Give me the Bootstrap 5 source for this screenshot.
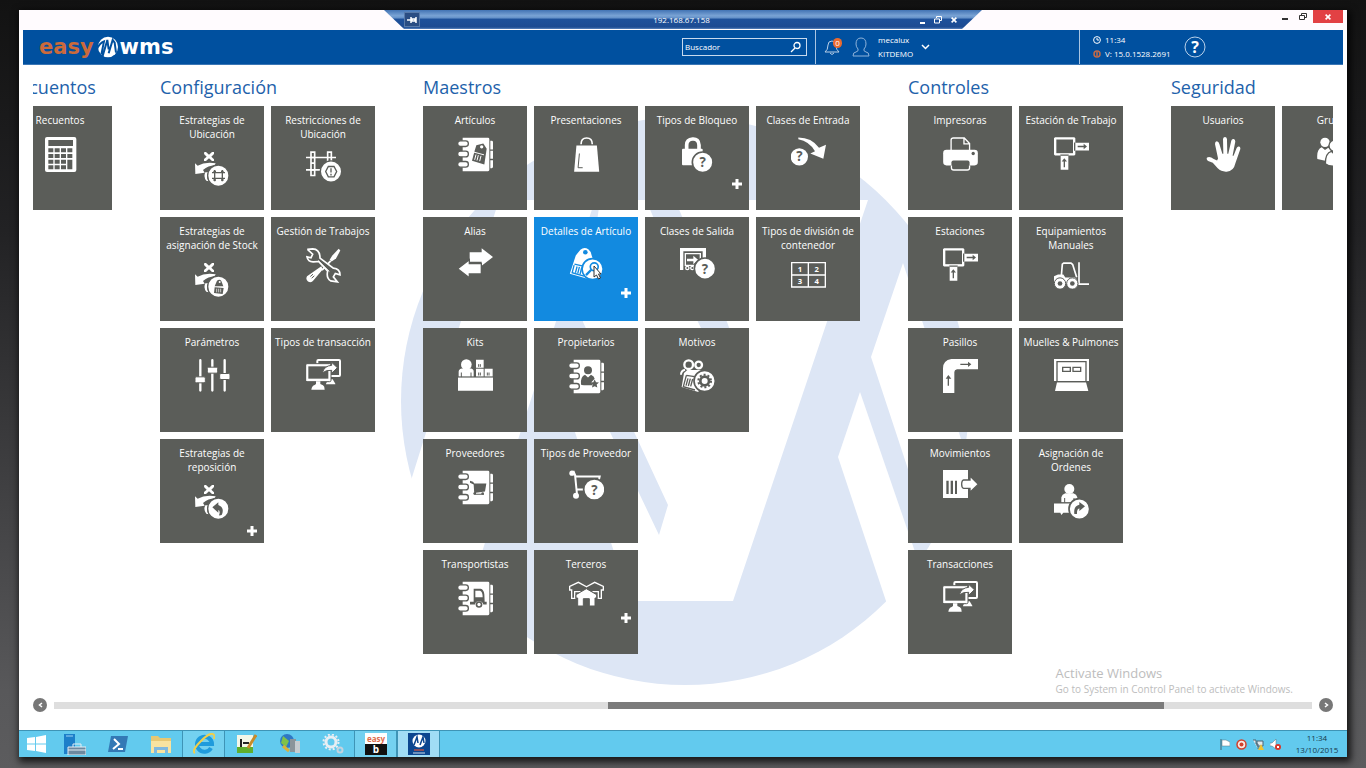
<!DOCTYPE html>
<html lang="es">
<head>
<meta charset="utf-8">
<meta name="viewport" content="width=device-width, initial-scale=1">
<title>Easy WMS</title>
<link href="https://cdn.jsdelivr.net/npm/bootstrap@5.3.0/dist/css/bootstrap.min.css" rel="stylesheet">
<style>
:root{--bg:#5b5d59;--brand:#00509f;--mark-tint:#dde6f5}
body{font-family:"Open Sans","Noto Sans",sans-serif;font-size:10px;line-height:14px;background:linear-gradient(#121212,#222224 30%,#58585a 90%,#5c5c5e);padding:10px 19px 11px;overflow:hidden}
.desktop{background:#fff;box-shadow:2px 3px 7px 2px rgba(0,0,0,.75)}
.titlebar{display:grid;grid-template-columns:1fr 598px 1fr;height:20px;background:#fffbfe}
.remote-tab{height:19px;padding:0 20px;color:#fff;font-size:8px;background:linear-gradient(#4273b4,#79a3d4 30%,#6390c8 42%,#1e519b 48%,#1d4b92 90%,#5b84bd);clip-path:polygon(0 0,100% 0,calc(100% - 20px) 100%,20px 100%)}
.plain-btn{border:0;padding:0;background:none;color:inherit;display:inline-flex;align-items:center;justify-content:center}
.pin{width:16px;height:15px;background:#2a4d83;border:1px solid #5879a8}
.close-win{width:30px;height:13px;background:#e24144;color:#fff}
.appbar{height:35px;background:var(--brand);color:#fff;margin:0 4px;font-size:8px;line-height:14px;border-bottom:1px solid #3a76b5}
.brand-text{font-family:"DejaVu Sans",sans-serif;font-weight:700;font-size:21px;line-height:24px;color:#fff;text-decoration:none}
.brand-text b{color:#cb6a3b}
.seek{width:125px;height:18px;border:1px solid #c8daee}
.seek input{background:none;border:0;outline:0;color:#fff;width:100%;padding:0 0 0 2px;font-size:8px}
.seek input::placeholder{color:#fff;opacity:1}
.zone{width:264px;border-left:1px solid #a9c5e2}
.stamp{margin:0 13px}
.bell{width:20px}
.count{position:absolute;right:2px;top:0;width:9px;height:10px;border-radius:5px;background:#e96a30;font-size:8px;line-height:10px;text-align:center}
.stage{position:relative}
.mark-bg{position:absolute;left:382px;top:52px;width:570px;height:570px}
.board{position:relative;overflow:hidden;margin:0 14px;gap:48px;padding-top:9px}
.board>section:first-child{margin-left:-25px}
.group-title{font-size:18px;line-height:27px;height:32px;margin:0;font-weight:400;color:#1e62ab;white-space:nowrap}
.tiles{gap:7px}
.tile{position:relative;display:flex;flex-direction:column;align-items:center;width:104px;height:104px;flex:none;background:var(--bg);color:#fff;text-align:center;text-decoration:none;padding-top:7px}
.tile span{padding:0 2px}
.tile svg.ic{width:35px;margin-top:10px;fill:#fff;stroke:none;flex:none}
.tile .more{align-self:flex-end;width:10px;height:10px;margin:7px 7px 0 0;fill:#fff}
.tile.on{--bg:#128ae0}
.cursor{position:absolute;left:59px;top:48px;width:9px;height:15px}
.k{fill:var(--bg)}
.ln{fill:none;stroke:#fff}
.kl{fill:none;stroke:var(--bg)}
.ws{stroke:var(--bg)}
.q{font:700 40px "Open Sans",sans-serif;fill:var(--bg);text-anchor:middle}
.num{font:700 23px "Open Sans",sans-serif;fill:#fff;text-anchor:middle}
.activate{color:#bdbdbd;padding:0 54px 2px 0;white-space:nowrap}
.activate .big{font-size:13px;line-height:17px}
.scroller{padding:0 14px;gap:7px;height:14px}
.knob{width:14px;height:14px;border-radius:50%;background:#777;color:#fff}
.track{height:7px;background:#dedede}
.thumb{height:7px;background:#7b7b7b;margin-left:44%;width:44.2%}
.taskbar{height:27px;background:#62caee;border-top:1px solid #3e94b6;color:#17384a;margin-top:18px}
.task{width:43px;height:26px}
.task.start{width:34px}
.task.open{background:#74d1f0;border:solid #3e94b6;border-width:0 1px}
.task.current{background:#a1ddf5}
.tray{gap:6px}
.clock{font-size:8px;line-height:12px;width:60px}
</style>
</head>
<body class="d-flex flex-column min-vh-100">

<svg class="d-none" aria-hidden="true">
 <defs>
  <g id="strat">
   <path d="M28 3l5 0 9 8 9-8 6 0v6l-8 8 8 8v5h-6l-9-8-9 8h-6v-6l8-7-8-8z"/>
   <path d="M0 37l8 7Q30 32 62 37L59 43Q40 44 24 57l5 8L1 69z"/>
   <path d="M31 64q-7 13 3 25l7 2q-9-14-1-27z"/>
   <circle class="ws" stroke-width="4" cx="70" cy="74" r="32"/>
  </g>
  <g id="book">
   <path d="M14 2h76q4 0 4 4v92q0 4-4 4H14V86h14v-10H14V56h14V46H14V26h14V17H14z"/>
   <g class="ws" stroke-width="4"><rect x="-1" y="11" width="32" height="17" rx="8"/><rect x="-1" y="42" width="32" height="17" rx="8"/><rect x="-1" y="73" width="32" height="17" rx="8"/></g>
   <path d="M97 11h4q4 0 4 4v22h-8zM97 41h8v24h-8zM97 69h8v20q0 4-4 4h-4z"/>
  </g>
 </defs>
 <symbol id="i-calc" viewBox="0 0 105 105"><rect x="6" width="94" height="105" rx="6"/><g class="k"><path d="M16 9h74v18H16zM16 34h15v12H16zM35 34h15v12H35zM54 34h15v12H54zM73 34h15v12H73zM16 51h15v12H16zM35 51h15v12H35zM54 51h15v12H54zM73 51h15v12H73zM16 68h15v12H16zM35 68h15v12H35zM54 68h15v12H54zM73 68h15v29H73zM16 85h15v12H16zM35 85h15v12H35zM54 85h15v12H54z"/></g></symbol>
 <symbol id="i-sgrid" viewBox="0 0 105 105"><use href="#strat"/><path class="kl" stroke-width="4" d="M59 57v34M82 57v34M51 65h39M51 82h39M55 61h8M78 61h8M55 87h8M78 87h8"/></symbol>
 <symbol id="i-stag" viewBox="0 0 105 105"><use href="#strat"/><path class="k" d="M66 56q8-6 13 1l6 16H59zM59 76l27 2-3 18-26-3z"/><circle cx="74" cy="60" r="3"/><path class="ln" stroke-width="2" d="M65 80v11M71 80v11M77 80v11"/></symbol>
 <symbol id="i-srep" viewBox="0 0 105 105"><use href="#strat"/><path class="k" d="M52 70l18-15v8q20 8 10 30-5 2-8 1 5-14-2-16v8z"/></symbol>
 <symbol id="i-restr" viewBox="0 0 105 92"><path class="ln" stroke-width="5" d="M0 19h90M0 56h45"/><path class="ln" stroke-width="5" d="M15 3h11v70H15zM65 3h11v32H65zM15 19h11M15 36h11M15 56h11"/><circle class="ws" stroke-width="4" cx="75" cy="61" r="32"/><path class="kl" stroke-width="4" d="M67 46h17l8 15-8 16H67l-8-16z"/><path class="kl" stroke-width="4" d="M75 51v13M75 68v5"/></symbol>
 <symbol id="i-tools" viewBox="0 0 105 104"><path d="M98 2l5 5-13 24-13 9-6-5 8-13z"/><path d="M72 36l-26 28 4 4 26-28z"/><path d="M46 54L3 84q-5 10 3 16 10 5 16-3l28-33z"/><path class="kl" stroke-width="3" d="M13 85l8-7M17 90l8-7"/><path class="k" stroke="#fff" stroke-width="5" d="M6 5l14 13-5 11L3 26q3 16 20 15l15-1 27 29q-5 20 9 29l20 3-12-15 6-10 14 4q0-18-20-20L42 30Q42 3 20 2L6 3z"/><path class="ln" stroke-width="3" d="M36 37l34 33"/></symbol>
 <symbol id="i-sliders" viewBox="0 0 105 98"><path class="ln" stroke-width="7" stroke-linecap="round" d="M16 3v91M52 3v91M89 3v91"/><g class="ws" stroke-width="3"><rect x="0" y="53" width="31" height="18" rx="4"/><rect x="37" y="24" width="31" height="18" rx="4"/><rect x="74" y="43" width="31" height="18" rx="4"/></g></symbol>
 <symbol id="i-screens" viewBox="0 0 105 93"><rect class="ln" stroke-width="6" x="34" y="3" width="68" height="48" rx="3"/><path d="M60 74q4-10 10-13h10l8 13v2H60z"/><rect class="ws" stroke-width="3" x="-1" y="14" width="76" height="54" rx="4"/><path class="k" d="M7 22h60v37H7z"/><path d="M16 92q2-12 10-14l4-3v-8h13v8l8 4q5 3 5 13z"/><path class="ws" stroke-width="3" d="M49 42q6-22 28-23v-9l17 16-17 17v-9q-17-2-28 8z"/></symbol>
 <symbol id="i-btag" viewBox="0 0 105 104"><use href="#book"/><path class="k" d="M55 24l21-5 10 16-7 47-37-11 8-30z"/><circle cx="71" cy="29" r="5"/><path class="ln" stroke-width="3" d="M48 45l30 8M54 52l-4 16M61 54l-4 16M69 56l-4 16"/></symbol>
 <symbol id="i-bag" viewBox="0 0 105 106"><path class="ln" stroke-width="5" d="M36 22q0-19 17-19t17 19"/><path d="M22 26h62l7 79H15z"/><path class="kl" stroke-width="3" d="M31 50l-4 43h14"/></symbol>
 <symbol id="i-lock" viewBox="0 0 105 105"><path class="ln" stroke-width="11" d="M20 42V24q0-17 18-18t19 18v18"/><rect x="6" y="35" width="62" height="50" rx="3"/><circle class="ws" stroke-width="5" cx="68" cy="76" r="31"/><text class="q" x="68" y="91">?</text></symbol>
 <symbol id="i-entry" viewBox="0 0 105 86"><path d="M22 1q40 0 62 31l21-9-8 42-39-16 14-7Q55 12 22 6z"/><circle cx="25" cy="59" r="26"/><text class="q" x="25" y="73">?</text></symbol>
 <symbol id="i-alias" viewBox="0 0 105 88"><path d="M35 12h36V0l34 26-34 26V40H35z"/><path class="ws" stroke-width="4" d="M70 46v31H34v11L-1 61l35-27v12z"/></symbol>
 <symbol id="i-detail" viewBox="0 0 105 100"><path d="M34 5q12-9 24-1 8 6 10 18l10 30-20 42-56-16 18-55z"/><circle class="k" cx="49" cy="13" r="7"/><path class="kl" stroke-width="4" d="M16 49l40 9M15 52L9 75l36 10M24 56l-5 19M31 57l-5 20M38 59l-5 20"/><circle class="ws" stroke-width="5" cx="71" cy="64" r="32"/><circle class="kl" stroke-width="5" cx="76" cy="57" r="12"/><path class="kl" stroke-width="7" d="M67 66L51 82"/></symbol>
 <symbol id="i-exit" viewBox="0 0 105 93"><path d="M0 0h78v34H68V10H10v56H0z"/><path class="ln" stroke-width="4" d="M16 17h45v35H16z"/><path d="M21 32h19v-9l15 13-15 13v-9H21z"/><circle class="ln" stroke-width="4" cx="22" cy="60" r="5"/><circle class="ln" stroke-width="4" cx="37" cy="60" r="5"/><circle class="ws" stroke-width="5" cx="75" cy="62" r="32"/><text class="q" x="75" y="77">?</text></symbol>
 <symbol id="i-cells" viewBox="0 0 105 78"><path class="ln" stroke-width="4" d="M2 2h101v73H2zM52 2v73M2 39h101"/><text class="num" x="27" y="29">1</text><text class="num" x="77" y="29">2</text><text class="num" x="27" y="66">3</text><text class="num" x="77" y="66">4</text></symbol>
 <symbol id="i-kits" viewBox="0 0 105 95"><circle cx="25" cy="16" r="16"/><path d="M2 52V37q1-8 10-9h26q9 1 9 9v15zM54 2h23v24H54zM54 29h23v23H54zM80 29h24v23H80zM0 54h105v41H0z"/><path class="kl" stroke-width="3" d="M10 40v14M39 40v14M62 15v8M67 15v8M62 40v9M67 40v9M88 40v9M93 40v9"/><path class="kl" stroke-width="2" d="M0 54h105"/></symbol>
 <symbol id="i-bperson" viewBox="0 0 105 104"><use href="#book"/><g class="k"><circle cx="57" cy="33" r="12"/><path d="M36 76q-2-24 12-29l9 8 9-8q10 4 11 12l-10 10 4 9H45q-9 0-9-2z"/><path d="M77 61l4 8 9 1-7 6 2 9-8-4-8 4 2-9-7-6 9-1z"/></g></symbol>
 <symbol id="i-reasons" viewBox="0 0 105 102"><path class="ln" stroke-width="6" d="M3 47q0-12 12-15"/><circle class="ln" stroke-width="7" cx="26" cy="17" r="13"/><circle class="ln" stroke-width="7" cx="56" cy="18" r="10"/><path d="M12 42l10-9h44l7 16-18 50-50-15z"/><path class="kl" stroke-width="4" d="M19 49L10 83l35 10M19 49l25 4M24 58l-6 22M31 59l-6 22M38 60l-6 22"/><circle class="ws" stroke-width="5" cx="74" cy="66" r="32"/><circle class="kl" stroke-width="8" cx="74" cy="66" r="13"/><circle class="kl" stroke-width="6" stroke-dasharray="6 6" cx="74" cy="66" r="19"/></symbol>
 <symbol id="i-bcart" viewBox="0 0 105 104"><use href="#book"/><path class="k" d="M36 32l9 3 4 5h36l-4 24-27 4v3h24v3H49l-2-31-11-5z"/><circle class="k" cx="50" cy="70" r="4"/><circle class="k" cx="74" cy="70" r="4"/></symbol>
 <symbol id="i-cartq" viewBox="0 0 105 87"><path class="ln" stroke-width="6" d="M4 8l10-4 6 14h72l-5 20M18 12l6 60M24 57h30"/><circle cx="9" cy="8" r="8"/><circle cx="21" cy="76" r="9"/><circle class="ws" stroke-width="5" cx="76" cy="57" r="32"/><text class="q" x="76" y="72">?</text></symbol>
 <symbol id="i-btruck" viewBox="0 0 105 104"><use href="#book"/><path class="k" d="M47 23h21q9 2 11 16l1 23h6v8H76q-2-10-13-10T51 70H36v-8h11zM52 29v19h22q0-16-8-19z" fill-rule="evenodd"/><circle class="k" cx="63" cy="70" r="10"/><circle cx="63" cy="70" r="5"/></symbol>
 <symbol id="i-houses" viewBox="0 0 105 73"><path class="ln" stroke-width="4" d="M2 22V15L28 3l26 14M2 20v6h6v25h9V31h18M103 22v-7L77 3 51 17M103 20v6h-6v25h-9V31H70"/><path class="ws" stroke-width="3" d="M52 22l31 18v10h-5v24H61V52H43v22H26V50h-5V40z"/></symbol>
 <symbol id="i-printer" viewBox="0 0 105 103"><path class="ln" stroke-width="4" d="M24 40V9q0-6 7-6h33l16 17v20M63 3v18h17"/><rect y="39" width="105" height="47" rx="10"/><circle class="k" cx="91" cy="50" r="5"/><rect x="25" y="71" width="55" height="29" rx="6" class="k"/><path class="ln" stroke-width="4" d="M25 86v7q0 7 7 7h41q7 0 7-7v-7"/></symbol>
 <symbol id="i-station" viewBox="0 0 105 98"><path d="M3 0h58l3 3v14h41v23H64v12l-3 3H43v43H20V55H3l-3-3V3z"/><path class="k" d="M7 7h50v41H7z"/><path class="kl" stroke-width="4" d="M62 16v25M19 54h25M71 28h21M31 90V69"/><path class="k" d="M89 20l10 8-10 8zM23 73l8-10 8 10z"/></symbol>
 <symbol id="i-fork" viewBox="0 0 105 80"><path class="ln" stroke-width="5" d="M22 42l3-36 4-3h22l5 4 12 38M75 0v66h30"/><path d="M0 42l12-5h16l6 9h28l5 4v14H0z"/><g class="ws" stroke-width="3"><circle cx="18" cy="64" r="17"/><circle cx="55" cy="64" r="17"/></g><circle class="k" cx="18" cy="64" r="7"/><circle class="k" cx="55" cy="64" r="7"/></symbol>
 <symbol id="i-hand" viewBox="0 0 105 106"><path d="M3 62q8-5 20 5l10 4 3-6-9-42q-1-9 5-10 6 0 8 8l9 30h3L51 6q1-6 6-6t6 6l1 45h3l9-40q2-6 7-5 6 2 5 9l-8 42h3l9-23q3-7 8-5 5 3 3 9L89 78Q83 105 62 105 46 106 35 95L20 78 6 73Q-1 67 3 62z"/></symbol>
 <symbol id="i-group" viewBox="0 0 105 90"><circle cx="24" cy="16" r="14"/><circle cx="82" cy="16" r="14"/><path d="M1 66Q-2 38 14 31l10 8 10-7 16 18-22 22zM104 66q3-28-13-35l-10 8-10-7-16 18 22 22z"/><g class="ws" stroke-width="4"><circle cx="53" cy="26" r="17"/><path d="M25 80q0-32 18-37l10 9 10-9q18 5 18 37-10 8-28 8t-28-8z"/></g></symbol>
 <symbol id="i-aisle" viewBox="0 0 105 102"><path d="M25 0h80v31H42q-8 2-8 8v63H0V28Q0 4 25 0z"/><path class="kl" stroke-width="4" d="M52 16h25M16 80V55"/><path class="k" d="M75 8l10 8-10 8zM8 59l8-11 9 11z"/></symbol>
 <symbol id="i-dock" viewBox="0 0 105 96"><path d="M0 0h105v66H0zM9 70h87l7 26H3z"/><path class="kl" stroke-width="4" d="M9 66V8h87v58M8 68h89M26 25h23v12H26zM57 25h23v12H57z"/></symbol>
 <symbol id="i-move" viewBox="0 0 105 84"><path d="M0 0h75v84H0z"/><path class="k" d="M10 32h7v40h-7zM23 32h7v40h-7zM36 32h6v40h-6z"/><path class="ws" stroke-width="4" d="M62 30h19V18l25 25-25 24V55H62q-6-1-6-12 0-12 6-13z"/></symbol>
 <symbol id="i-assign" viewBox="0 0 105 105"><circle cx="46" cy="15" r="15"/><path d="M22 55V40q2-9 12-12h24q10 3 12 12v15zM0 57h60v29H28l-6 7-3-7H0z"/><path class="kl" stroke-width="3" d="M32 42v14M60 42v8M0 57h50"/><circle class="ws" stroke-width="5" cx="76" cy="75" r="31"/><path class="k" d="M61 90q-3-24 15-28v-8l17 13-17 14v-8q-8 3-7 17z"/></symbol>
 <symbol id="i-plus" viewBox="0 0 20 20"><path d="M7 0h6v7h7v6h-7v7H7v-7H0V7h7z"/></symbol>
</svg>

<div class="desktop d-flex flex-column flex-grow-1">
 <div class="titlebar">
  <span></span>
  <div class="remote-tab d-flex align-items-center">
   <button class="plain-btn pin" aria-label="Fijar"><svg width="10" height="8" viewBox="0 0 10 8"><path d="M0 4h4M4 1v6M5 3h3v2H5zM9 1v6" stroke="#fff" stroke-width="1.5" fill="none"/></svg></button>
   <span class="flex-grow-1 text-center ps-4">192.168.67.158</span>
   <div class="d-flex gap-2 me-1">
    <button class="plain-btn" aria-label="Minimizar"><svg width="7" height="8"><path d="M1 7h5" stroke="#fff" stroke-width="2"/></svg></button>
    <button class="plain-btn" aria-label="Restaurar"><svg width="8" height="8"><path d="M2.500 2V.5h5v4H6M.5 3h5v4h-5z" stroke="#fff" fill="none"/></svg></button>
    <button class="plain-btn" aria-label="Cerrar"><svg width="8" height="8" viewBox="-1 -1 10 10"><path d="M1 1l6 6M7 1L1 7" stroke="#fff" stroke-width="2"/></svg></button>
   </div>
  </div>
  <div class="d-flex justify-content-end align-items-start pe-1">
   <button class="plain-btn mt-1 me-2" aria-label="Minimizar"><svg width="8" height="6"><path d="M1 5h6" stroke="#333" stroke-width="2"/></svg></button>
   <button class="plain-btn me-1" aria-label="Restaurar"><svg width="12" height="12"><path d="M4.500 5V3.500h5v4H8M2.500 5.500h5v4h-5z" stroke="#333" fill="none"/></svg></button>
   <button class="plain-btn close-win" aria-label="Cerrar"><svg width="8" height="8" viewBox="-1 -1 10 10"><path d="M1 1l6 6M7 1L1 7" stroke="#fff" stroke-width="2"/></svg></button>
  </div>
 </div>

 <header class="appbar d-flex align-items-stretch">
  <a class="brand-text d-flex align-items-center ps-3" href="#"><b>easy</b>
   <svg width="26" height="22" viewBox="0 0 78 66"><ellipse cx="42" cy="33" rx="30" ry="31" fill="#fff"/><path d="M8 40Q18 20 30 16L22 56M26 60L40 12 44 40M44 52L56 12 62 20 66 50" fill="none" stroke="#00509f" stroke-width="6"/></svg>wms</a>
  <form class="ms-auto me-2 d-flex align-items-center" role="search">
   <div class="seek d-flex align-items-center"><input type="text" placeholder="Buscador" aria-label="Buscador">
    <button type="button" class="plain-btn me-1" aria-label="Buscar"><svg width="12" height="12" viewBox="0 0 12 12" fill="none" stroke="#fff" stroke-width="1.300"><circle cx="7" cy="4.500" r="3"/><path d="M5 7L1 11"/></svg></button></div>
  </form>
  <div class="zone d-flex align-items-center ps-2">
   <button class="plain-btn position-relative bell justify-content-start" aria-label="Avisos"><svg width="16" height="18" viewBox="0 0 16 18" fill="none" stroke="#b9cfe7"><path d="M1 14q3-2 3-7 0-4 4-4t4 4q0 5 3 7zM6 15q2 3 4 0"/></svg><span class="count">0</span></button>
   <svg class="ms-2" width="18" height="20" viewBox="0 0 18 20" fill="none" stroke="#8fb3da"><path d="M9 1q5 0 5 6 0 3-2 5-1 2 2 3 3 0 3 4H1q0-4 3-4 3-1 2-3-2-2-2-5 0-6 5-6z"/></svg>
   <div class="ms-2">mecalux<br>KITDEMO</div>
   <button class="plain-btn ms-2" aria-label="Abrir menú"><svg width="9" height="6" viewBox="0 0 9 6" fill="none" stroke="#fff" stroke-width="1.500"><path d="M1 1l3.500 3.500L8 1"/></svg></button>
  </div>
  <div class="zone d-flex align-items-center">
   <div class="stamp">
    <div class="d-flex align-items-center gap-1"><svg width="8" height="8" viewBox="0 0 8 8" fill="none" stroke="#fff"><circle cx="4" cy="4" r="3.400"/><path d="M4 2v2h2"/></svg>11:34</div>
    <div class="d-flex align-items-center gap-1"><svg width="8" height="8" viewBox="0 0 8 8" fill="none" stroke="#c56a45" stroke-width="1.500"><circle cx="4" cy="4" r="3"/><path d="M4 2v4"/></svg>V: 15.0.1528.2691</div>
   </div>
   <button class="plain-btn" aria-label="Ayuda"><svg width="22" height="22" viewBox="0 0 22 22"><circle cx="11" cy="11" r="10" fill="none" stroke="#b9d1ea"/><text x="11" y="17" fill="#fff" text-anchor="middle" font-size="16" font-weight="700">?</text></svg></button>
  </div>
 </header>

 <main class="stage flex-grow-1 d-flex flex-column">
  <svg class="mark-bg" viewBox="401 117 570 570" aria-hidden="true">
   <circle cx="685" cy="401" r="284" fill="#dde6f5"/>
   <g fill="#fff">
    <path d="M600 200H868L733 601H630L572 423 590 390 659 535 668 505 583 322z"/>
    <path d="M903 263L871 357 940 566H990V527z"/>
    <path d="M860 392L838 457 888 607 934 607z"/>
    <path d="M499 200L408 490 400 622H460L483 549 595 200z"/>
   </g>
   <path d="M646 200h29l52 122 12 32-10 30-31-62z" fill="#dde6f5"/>
  </svg>

  <div class="board d-flex">
   <section><h2 class="group-title">Recuentos</h2>
    <div class="tiles d-flex"><a class="tile" href="#"><span>Recuentos</span><svg class="ic" height="35"><use href="#i-calc"/></svg></a></div>
   </section>
   <section><h2 class="group-title">Configuración</h2>
    <div class="tiles d-flex">
     <div class="tiles d-flex flex-column">
      <a class="tile" href="#"><span>Estrategias de Ubicación</span><svg class="ic" height="35"><use href="#i-sgrid"/></svg></a>
      <a class="tile" href="#"><span>Estrategias de asignación de Stock</span><svg class="ic" height="35"><use href="#i-stag"/></svg></a>
      <a class="tile" href="#"><span>Parámetros</span><svg class="ic" height="33"><use href="#i-sliders"/></svg></a>
      <a class="tile" href="#"><span>Estrategias de reposición</span><svg class="ic" height="35"><use href="#i-srep"/></svg><svg class="more"><use href="#i-plus"/></svg></a>
     </div>
     <div class="tiles d-flex flex-column">
      <a class="tile" href="#"><span>Restricciones de Ubicación</span><svg class="ic" height="31"><use href="#i-restr"/></svg></a>
      <a class="tile" href="#"><span>Gestión de Trabajos</span><svg class="ic" height="35"><use href="#i-tools"/></svg></a>
      <a class="tile" href="#"><span>Tipos de transacción</span><svg class="ic" height="31"><use href="#i-screens"/></svg></a>
     </div>
    </div>
   </section>
   <section><h2 class="group-title">Maestros</h2>
    <div class="tiles d-flex">
     <div class="tiles d-flex flex-column">
      <a class="tile" href="#"><span>Artículos</span><svg class="ic" height="35"><use href="#i-btag"/></svg></a>
      <a class="tile" href="#"><span>Alias</span><svg class="ic" height="30"><use href="#i-alias"/></svg></a>
      <a class="tile" href="#"><span>Kits</span><svg class="ic" height="32"><use href="#i-kits"/></svg></a>
      <a class="tile" href="#"><span>Proveedores</span><svg class="ic" height="35"><use href="#i-bcart"/></svg></a>
      <a class="tile" href="#"><span>Transportistas</span><svg class="ic" height="35"><use href="#i-btruck"/></svg></a>
     </div>
     <div class="tiles d-flex flex-column">
      <a class="tile" href="#"><span>Presentaciones</span><svg class="ic" height="35"><use href="#i-bag"/></svg></a>
      <a class="tile on" href="#"><span>Detalles de Artículo</span><svg class="ic" height="33"><use href="#i-detail"/></svg><svg class="more"><use href="#i-plus"/></svg><svg class="cursor" viewBox="0 0 9 15"><path d="M1 1v11l2.500-2 2 4 2-1-2-4H8z" fill="#fff" stroke="#333"/></svg></a>
      <a class="tile" href="#"><span>Propietarios</span><svg class="ic" height="35"><use href="#i-bperson"/></svg></a>
      <a class="tile" href="#"><span>Tipos de Proveedor</span><svg class="ic" height="30"><use href="#i-cartq"/></svg></a>
      <a class="tile" href="#"><span>Terceros</span><svg class="ic" height="25"><use href="#i-houses"/></svg><svg class="more"><use href="#i-plus"/></svg></a>
     </div>
     <div class="tiles d-flex flex-column">
      <a class="tile" href="#"><span>Tipos de Bloqueo</span><svg class="ic" height="35"><use href="#i-lock"/></svg><svg class="more"><use href="#i-plus"/></svg></a>
      <a class="tile" href="#"><span>Clases de Salida</span><svg class="ic" height="31"><use href="#i-exit"/></svg></a>
      <a class="tile" href="#"><span>Motivos</span><svg class="ic" height="34"><use href="#i-reasons"/></svg></a>
     </div>
     <div class="tiles d-flex flex-column">
      <a class="tile" href="#"><span>Clases de Entrada</span><svg class="ic" height="29"><use href="#i-entry"/></svg></a>
      <a class="tile" href="#"><span>Tipos de división de contenedor</span><svg class="ic" height="26"><use href="#i-cells"/></svg></a>
     </div>
    </div>
   </section>
   <section><h2 class="group-title">Controles</h2>
    <div class="tiles d-flex">
     <div class="tiles d-flex flex-column">
      <a class="tile" href="#"><span>Impresoras</span><svg class="ic" height="34"><use href="#i-printer"/></svg></a>
      <a class="tile" href="#"><span>Estaciones</span><svg class="ic" height="33"><use href="#i-station"/></svg></a>
      <a class="tile" href="#"><span>Pasillos</span><svg class="ic" height="34"><use href="#i-aisle"/></svg></a>
      <a class="tile" href="#"><span>Movimientos</span><svg class="ic" height="28"><use href="#i-move"/></svg></a>
      <a class="tile" href="#"><span>Transacciones</span><svg class="ic" height="31"><use href="#i-screens"/></svg></a>
     </div>
     <div class="tiles d-flex flex-column">
      <a class="tile" href="#"><span>Estación de Trabajo</span><svg class="ic" height="33"><use href="#i-station"/></svg></a>
      <a class="tile" href="#"><span>Equipamientos Manuales</span><svg class="ic" height="27"><use href="#i-fork"/></svg></a>
      <a class="tile" href="#"><span>Muelles &amp; Pulmones</span><svg class="ic" height="32"><use href="#i-dock"/></svg></a>
      <a class="tile" href="#"><span>Asignación de Ordenes</span><svg class="ic" height="35"><use href="#i-assign"/></svg></a>
     </div>
    </div>
   </section>
   <section><h2 class="group-title">Seguridad</h2>
    <div class="tiles d-flex">
     <a class="tile" href="#"><span>Usuarios</span><svg class="ic" height="35"><use href="#i-hand"/></svg></a>
     <a class="tile" href="#"><span>Grupos</span><svg class="ic" height="30"><use href="#i-group"/></svg></a>
    </div>
   </section>
  </div>

  <div class="mt-auto">
   <div class="activate d-flex justify-content-end"><div><div class="big">Activate Windows</div>Go to System in Control Panel to activate Windows.</div></div>
   <div class="scroller d-flex align-items-center">
    <button class="plain-btn knob" aria-label="Anterior"><svg width="5" height="6" fill="none" stroke="#fff" stroke-width="1.500"><path d="M4 1L1.500 3 4 5"/></svg></button>
    <div class="track flex-grow-1"><div class="thumb"></div></div>
    <button class="plain-btn knob" aria-label="Siguiente"><svg width="5" height="6" fill="none" stroke="#fff" stroke-width="1.500"><path d="M1 1l2.500 2L1 5"/></svg></button>
   </div>
  </div>
 </main>

 <footer class="taskbar d-flex align-items-center">
  <button class="plain-btn task start" aria-label="Inicio"><svg width="19" height="18" viewBox="0 0 19 18" fill="#fff"><path d="M0 3l8-1v6.500H0zM9 2l10-2v8.500H9zM0 9.500h8V16l-8-1zM9 9.500h10V18L9 16z"/></svg></button>
  <button class="plain-btn task" aria-label="Administrador del servidor"><svg width="22" height="22" viewBox="0 0 22 22"><path d="M0 1h11v20H0z" fill="#1d7fc9"/><path d="M2 3h7" stroke="#9fd4f5" stroke-width="1"/><path d="M4 14h18v8H4z" fill="#6d89a0" stroke="#e4eef5"/><path d="M9 14v-3h8v3M4 17h18" fill="none" stroke="#e4eef5"/></svg></button>
  <button class="plain-btn task" aria-label="PowerShell"><svg width="20" height="18" viewBox="0 0 20 18"><path d="M3 1h17l-3 16H0z" fill="#3379b5"/><path d="M6 4l5 5-6 5M10 14h5" fill="none" stroke="#fff" stroke-width="2"/></svg></button>
  <button class="plain-btn task" aria-label="Explorador de archivos"><svg width="22" height="20" viewBox="0 0 22 20"><path d="M1 2h7l2 2h11v15H1z" fill="#e7c873"/><path d="M1 7h20v12H1z" fill="#f7e3a0"/><path d="M4 19v-6h14v6h-3v-3H7v3z" fill="#7fb9df"/></svg></button>
  <button class="plain-btn task open" aria-label="Internet Explorer"><svg width="22" height="22" viewBox="0 0 22 22"><path d="M18 15a7.500 7.500 0 1 1 1-4H6" fill="none" stroke="#1f9bdc" stroke-width="4"/><path d="M2 20Q-2 18 8 8T21 2q1 1 0 4" fill="none" stroke="#f0cf4b" stroke-width="2"/></svg></button>
  <button class="plain-btn task" aria-label="Editor"><svg width="20" height="20" viewBox="0 0 20 20"><path d="M0 1h16v18H0z" fill="#f4f7e8"/><path d="M0 13h16v6H0z" fill="#5fae2c"/><path d="M4 5v8M6 9h6" stroke="#222" stroke-width="2"/><path d="M19 1l-8 13" stroke="#c88b2a" stroke-width="3"/></svg></button>
  <button class="plain-btn task" aria-label="Red"><svg width="22" height="20" viewBox="0 0 22 20"><circle cx="8" cy="7" r="7" fill="#2f78c4"/><path d="M4 2l6 5-3 6-5-4z" fill="#7fc24a"/><path d="M11 5h6v13h-6z" fill="#8a949a"/><path d="M16 7h5v12h-5z" fill="#c6ccd0"/><path d="M4 12l6 5" stroke="#d9b23c" stroke-width="3"/></svg></button>
  <button class="plain-btn task" aria-label="Servicios"><svg width="22" height="20" viewBox="0 0 22 20" fill="none"><circle cx="9" cy="8" r="5" stroke="#e8eef3" stroke-width="3"/><circle cx="9" cy="8" r="7.500" stroke="#e8eef3" stroke-width="2" stroke-dasharray="2 2"/><circle cx="18" cy="16" r="2.500" stroke="#c3d3df" stroke-width="2"/></svg></button>
  <button class="plain-btn task open" aria-label="Easy B"><svg width="22" height="22" viewBox="0 0 22 22"><path d="M0 0h22v11H0z" fill="#fff"/><path d="M0 11h22v11H0z" fill="#111"/><text x="11" y="9" font-size="8" font-weight="700" fill="#dd6a4a" text-anchor="middle">easy</text><text x="11" y="20" font-size="10" font-weight="700" fill="#fff" text-anchor="middle">b</text></svg></button>
  <button class="plain-btn task open current" aria-label="Easy WMS"><svg width="22" height="22" viewBox="0 0 22 22"><path d="M0 0h22v22H0z" fill="#0b468f"/><circle cx="11" cy="8" r="6.500" fill="#fff"/><path d="M6 12L9 4l1 6M12 12l3-8 1 6" fill="none" stroke="#0b468f" stroke-width="1.500"/><path d="M6 17h10" stroke="#b5524a" stroke-width="1.500"/><path d="M5 20h12" stroke="#cfdcec"/></svg></button>
  <div class="ms-auto d-flex align-items-center tray">
   <svg width="10" height="11" viewBox="0 0 10 11"><path d="M1 0v11" stroke="#42606f"/><path d="M2 1h4l4 2v4H2z" fill="#fff" stroke="#56707c" stroke-width=".5"/></svg>
   <svg width="11" height="11" viewBox="0 0 11 11"><circle cx="5.500" cy="5.500" r="4.500" fill="#fbe9e4" stroke="#d2402c" stroke-width="1.500"/><circle cx="5.500" cy="5.500" r="2" fill="#d2402c"/></svg>
   <svg width="11" height="11" viewBox="0 0 11 11"><path d="M0 1h3v4h2v5M4 2h6v5H4z" fill="#dfe9ee" stroke="#4b6472"/><path d="M8 5l3 6H5z" fill="#f2c230"/></svg>
   <svg width="11" height="11" viewBox="0 0 11 11"><path d="M0 4h2l4-4v10L2 7H0z" fill="#fff" stroke="#56707c" stroke-width=".5"/><circle cx="8" cy="8" r="3" fill="#d6372b"/><path d="M7 7l2 2M9 7L7 9" stroke="#fff"/></svg>
   <div class="clock text-center">11:34<br>13/10/2015</div>
  </div>
 </footer>
</div>
<script src="https://cdn.jsdelivr.net/npm/bootstrap@5.3.0/dist/js/bootstrap.bundle.min.js"></script>
</body>
</html>
